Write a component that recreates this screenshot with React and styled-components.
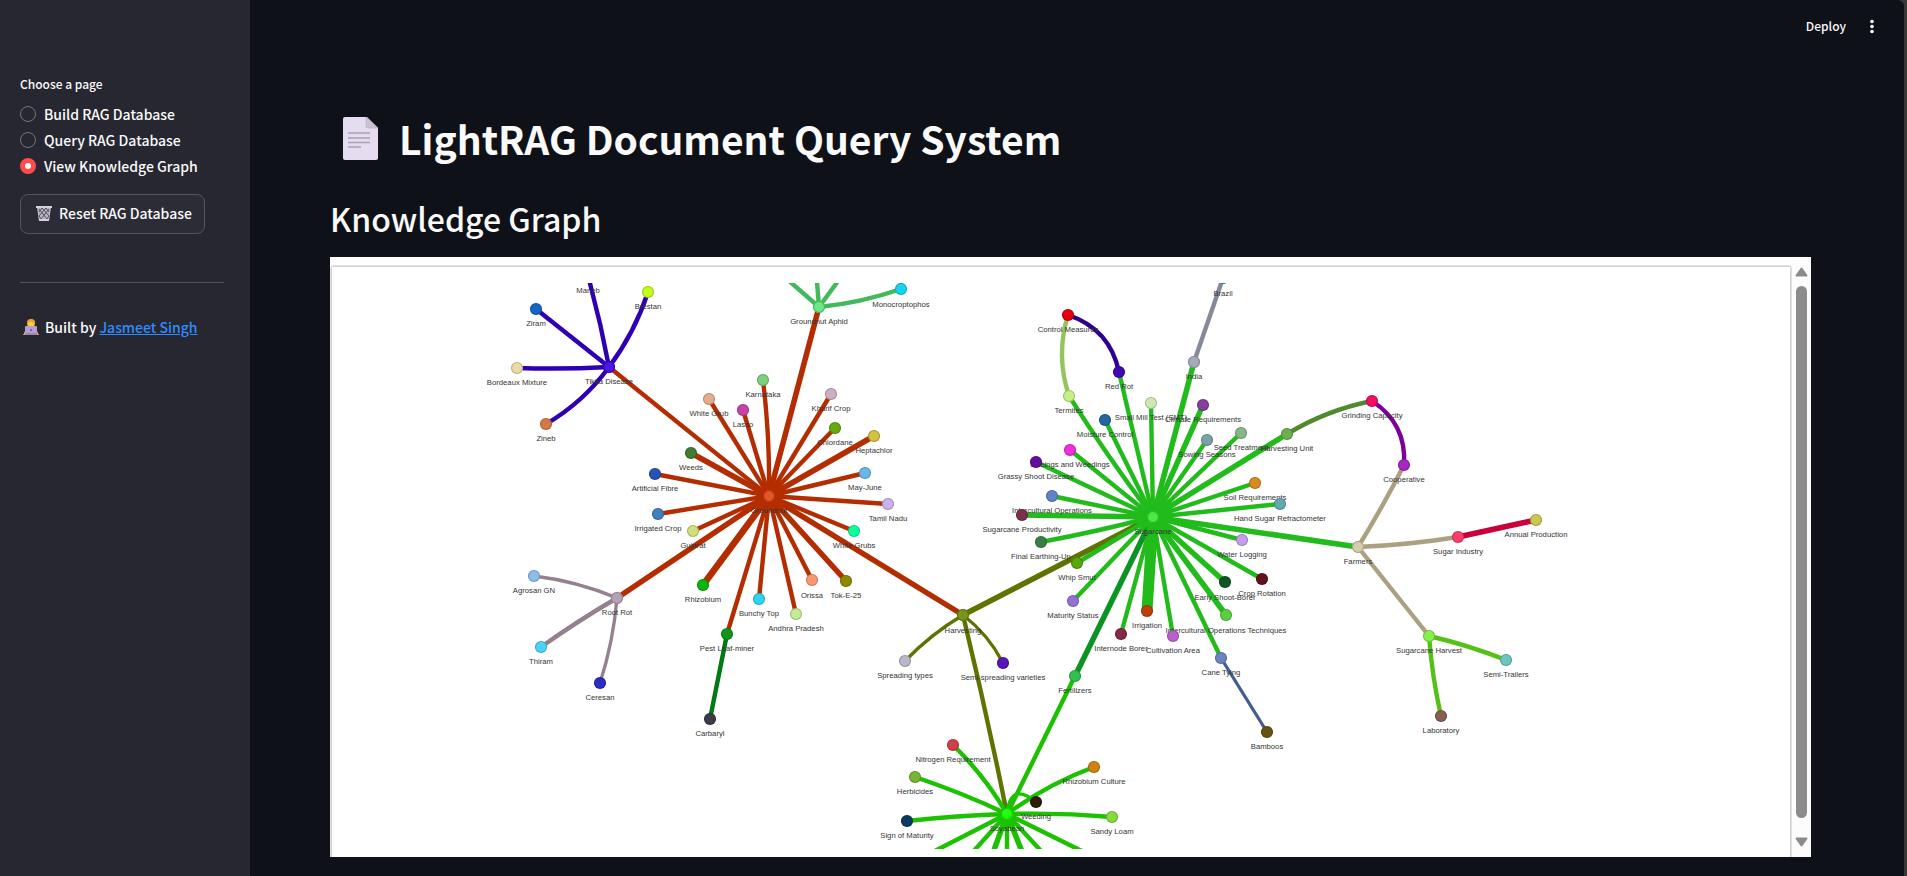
import React, { useState } from "react";
import styled, { createGlobalStyle } from "styled-components";

const GlobalStyle = createGlobalStyle`
  * { box-sizing: border-box; }
  body {
    margin: 0;
    background: #393939;
    color: #fafafa;
    font-family: "Source Sans Pro", "Noto Sans CJK JP", "Noto Sans", sans-serif;
    font-size: 14px;
    font-weight: 500;
    line-height: 24px;
  }
`;

const Shell = styled.div`
  display: flex;
  min-height: 100vh;
  margin-right: 3px;
  background: #0e1117;
  border-top-right-radius: 6px;
  overflow: hidden;
`;

const Sidebar = styled.aside`
  flex: 0 0 250px;
  padding: 74px 26px 24px 20px;
  background: #262730;
`;

const RadioGroup = styled.fieldset`
  margin: 0;
  padding: 0;
  border: 0;
`;

const Legend = styled.legend`
  padding: 0;
  margin-bottom: 6px;
  font-size: 12px;
  line-height: 20px;
`;

const RadioLabel = styled.label`
  display: flex;
  align-items: center;
  gap: 8px;
  height: 24px;
  margin-top: 2px;
  line-height: 22px;
  cursor: pointer;
`;

const RadioInput = styled.input`
  appearance: none;
  width: 16px;
  height: 16px;
  margin: 0;
  border: 1px solid #75767d;
  border-radius: 50%;
  background: #262730;
  &:checked {
    border: 5px solid #ff4b4b;
    background: #fafafa;
  }
`;

const ResetButton = styled.button`
  display: flex;
  align-items: center;
  gap: 6px;
  height: 40px;
  margin-top: 16px;
  padding: 0 12px 2px 14px;
  border: 1px solid #53545c;
  border-radius: 8px;
  background: #2b2c36;
  color: inherit;
  font: inherit;
  white-space: nowrap;
`;

const Divider = styled.hr`
  height: 1px;
  margin: 48px 0 32px;
  border: 0;
  background: #51525a;
`;

const Credit = styled.p`
  display: flex;
  align-items: center;
  gap: 6px;
  margin: 0;
  padding-left: 3px;
  white-space: pre;
`;

const CreditLink = styled.a`
  color: #2f8cff;
`;

const Main = styled.main`
  flex: 1;
  min-width: 0;
  padding-bottom: 19px;
`;

const Toolbar = styled.header`
  display: flex;
  justify-content: flex-end;
  align-items: center;
  gap: 16px;
  height: 52px;
  padding-right: 22px;
`;

const ToolButton = styled.button`
  display: flex;
  align-items: center;
  padding: 0;
  border: 0;
  background: none;
  color: inherit;
  font: inherit;
  font-size: 12px;
`;

const Content = styled.div`
  padding: 58px 93px 0 80px;
`;

const Title = styled.h1`
  display: flex;
  align-items: center;
  gap: 15px;
  margin: 0;
  padding-left: 8px;
  font-size: 39px;
  font-weight: 700;
  line-height: 56px;
`;

const Heading = styled.h2`
  margin: 28px 0 0;
  font-size: 32px;
  font-weight: 500;
  line-height: 48px;
`;

const Panel = styled.section`
  display: flex;
  height: 600px;
  margin-top: 15px;
  background: #fff;
  overflow: hidden;
`;

const Card = styled.div`
  flex: 1;
  min-width: 0;
  height: 740px;
  margin-top: 8px;
  border: 1px solid #dfdfdf;
  border-radius: 4px;
`;

const Network = styled.div`
  height: 738px;
  padding-top: 16px;
  border: 1px solid #d3d3d3;
`;

const Graph = styled.svg`
  display: block;
  width: 100%;
  height: auto;
  text {
    fill: #343434;
    font-family: "Liberation Sans", Arial, sans-serif;
    font-size: 14px;
    font-weight: 400;
    text-anchor: middle;
    dominant-baseline: central;
  }
`;

const ScrollTrack = styled.div`
  display: flex;
  flex-direction: column;
  align-items: center;
  gap: 9px;
  width: 19px;
  padding: 10px 0;
  background: #fcfcfc;
`;

const ScrollThumb = styled.div`
  flex: 1;
  width: 11px;
  margin-bottom: 10px;
  border-radius: 6px;
  background: #8b8b8b;
`;

const GROUND = "#b32d00";
const CANE = "#21bb1c";
const TIKKA = "#2f00b3";
const APHID = "#42b95b";
const ROT = "#94808e";
const HARVEST = "#5f7300";
const SOY = "#1cc200";
const FARM = "#aca083";

// name: [x, y, fill, border]
const nodes = {
  Ziram: [536, 309, "#1265c4"],
  Maneb: [588, 276, "#40a060"],
  Brestan: [648, 292, "#bfff1a"],
  "Bordeaux Mixture": [517, 368, "#edd9a3"],
  "Tikka Disease": [609, 367, "#4b18dd", TIKKA],
  Zineb: [546, 424, "#d27a45"],
  "White Grub": [709, 399, "#e4ab8e"],
  Weeds: [691, 453, "#437c2f"],
  "Artificial Fibre": [655, 474, "#2753b5"],
  "Irrigated Crop": [658, 514, "#417fbd"],
  Gujarat: [693, 531, "#d1de7c"],
  Monocroptophos: [901, 289, "#17d3f2"],
  "Groundnut Aphid": [819, 307, "#6fe585", APHID],
  Karnataka: [763, 380, "#7ad179"],
  "Kharif Crop": [831, 394, "#cab0c4"],
  Lasso: [743, 410, "#c843a3"],
  Chlordane: [835, 428, "#67a90f"],
  Heptachlor: [874, 436, "#d4bf3f"],
  "May-June": [865, 473, "#69b7e7"],
  "Tamil Nadu": [888, 504, "#c8b3ee"],
  "White Grubs": [854, 531, "#0fff9d"],
  Groundnut: [769, 496, "#e05828", GROUND],
  "Agrosan GN": [534, 576, "#8cbcec"],
  "Root Rot": [617, 598, "#b5a3b5", ROT],
  Thiram: [541, 647, "#4bd3ff"],
  Ceresan: [600, 683, "#2a2cc4"],
  Rhizobium: [703, 585, "#08b50b"],
  "Pest Leaf-miner": [727, 634, "#12961a"],
  Carbaryl: [710, 719, "#3f3a47"],
  "Bunchy Top": [759, 599, "#2ed3f2"],
  "Andhra Pradesh": [796, 614, "#c3ec95"],
  Orissa: [812, 580, "#ff9670"],
  "Tok-E-25": [846, 581, "#8e8a00"],
  "Control Measures": [1068, 315, "#e3000f"],
  "Red Rot": [1119, 372, "#4009b3"],
  Termites: [1069, 396, "#c3f08a"],
  "Moisture Control": [1105, 420, "#2168a0"],
  "Small Mill Test (SMT)": [1151, 403, "#cfe9b5"],
  India: [1194, 362, "#a5a9b9", "#858a98"],
  Brazil: [1223, 278, "#1ea88c"],
  "Climate Requirements": [1203, 405, "#84409a"],
  "Hoeings and Weedings": [1070, 450, "#f22de0"],
  "Grassy Shoot Disease": [1036, 462, "#630f9c"],
  "Intercultural Operations": [1052, 496, "#6382c5"],
  "Sugarcane Productivity": [1022, 515, "#7b3149"],
  "Final Earthing-Up": [1041, 542, "#3a7f45"],
  "Whip Smut": [1077, 563, "#57a80d"],
  "Sowing Seasons": [1207, 440, "#7aa1a3"],
  "Seed Treatment": [1241, 433, "#86b786"],
  "Harvesting Unit": [1287, 434, "#70ae50"],
  "Grinding Capacity": [1372, 401, "#f20e63"],
  Cooperative: [1404, 465, "#a22ac2"],
  "Soil Requirements": [1255, 483, "#d98b20"],
  "Hand Sugar Refractometer": [1280, 504, "#62a9af"],
  "Water Logging": [1242, 540, "#c69fec"],
  Farmers: [1358, 547, "#d8ccae", FARM],
  "Annual Production": [1536, 520, "#c8c850"],
  "Sugar Industry": [1458, 537, "#ff3d6b"],
  "Sugarcane Harvest": [1429, 636, "#88f04a"],
  "Semi-Trailers": [1506, 660, "#6cc5c0"],
  Laboratory: [1441, 716, "#875e52"],
  "Maturity Status": [1073, 601, "#9370d4"],
  "Internode Borer": [1121, 634, "#832a44"],
  Irrigation: [1147, 611, "#bd3f0c"],
  "Early Shoot-Borer": [1225, 582, "#11562a"],
  "Crop Rotation": [1262, 579, "#62121f"],
  "Intercultural Operations Techniques": [1226, 615, "#5bce42"],
  "Cultivation Area": [1173, 636, "#b860d0"],
  "Cane Tying": [1221, 658, "#6a84c0"],
  Bamboos: [1267, 732, "#665213"],
  Sugarcane: [1153, 517, "#4ce84a", CANE],
  Harvesting: [963, 615, "#789420", HARVEST],
  "Spreading types": [905, 661, "#bbb7cb"],
  "Semi-spreading varieties": [1003, 663, "#5814b8"],
  Fertilizers: [1075, 676, "#32c14d"],
  "Nitrogen Requirement": [953, 745, "#d04048"],
  Herbicides: [915, 777, "#77b536"],
  "Sign of Maturity": [907, 821, "#0d3a60"],
  Weeding: [1036, 802, "#301b05"],
  "Rhizobium Culture": [1094, 767, "#cf8115"],
  "Sandy Loam": [1112, 817, "#87da3c"],
  Soyabean: [1007, 814, "#1fff0d", SOY],
};

// [from, to (a node name or a point outside the view), colour, weight, bend]
const edges = [
  ["Tikka Disease", "Ziram", TIKKA, 4, 0],
  ["Tikka Disease", "Maneb", TIKKA, 4, 2],
  ["Tikka Disease", "Brestan", TIKKA, 4, 7],
  ["Tikka Disease", "Bordeaux Mixture", TIKKA, 4, -2],
  ["Tikka Disease", "Zineb", TIKKA, 4, -9],
  ["Groundnut", "Tikka Disease", GROUND, 4, 0],
  ["Groundnut", "White Grub", GROUND, 4, 0],
  ["Groundnut", "Weeds", GROUND, 5, 0],
  ["Groundnut", "Artificial Fibre", GROUND, 4, 0],
  ["Groundnut", "Irrigated Crop", GROUND, 4, 0],
  ["Groundnut", "Gujarat", GROUND, 4, 0],
  ["Groundnut", "Groundnut Aphid", GROUND, 5, 0],
  ["Groundnut", "Karnataka", GROUND, 4, 4],
  ["Groundnut", "Kharif Crop", GROUND, 4, 0],
  ["Groundnut", "Lasso", GROUND, 4, 0],
  ["Groundnut", "Chlordane", GROUND, 4, 0],
  ["Groundnut", "Heptachlor", GROUND, 5, 0],
  ["Groundnut", "May-June", GROUND, 4, 0],
  ["Groundnut", "Tamil Nadu", GROUND, 4, 0],
  ["Groundnut", "White Grubs", GROUND, 4, 0],
  ["Groundnut", "Root Rot", GROUND, 5, 0],
  ["Groundnut", "Rhizobium", GROUND, 6, 0],
  ["Groundnut", "Pest Leaf-miner", GROUND, 4, 0],
  ["Groundnut", "Bunchy Top", GROUND, 4, 0],
  ["Groundnut", "Andhra Pradesh", GROUND, 4, 0],
  ["Groundnut", "Orissa", GROUND, 4, 0],
  ["Groundnut", "Tok-E-25", GROUND, 5, 0],
  ["Groundnut", "Harvesting", GROUND, 5, 0],
  ["Groundnut Aphid", "Monocroptophos", APHID, 4, 5],
  ["Groundnut Aphid", [780, 273], APHID, 4, 0],
  ["Groundnut Aphid", [816, 270], APHID, 4, 0],
  ["Groundnut Aphid", [844, 273], APHID, 4, 0],
  ["Root Rot", "Agrosan GN", ROT, 3, 6],
  ["Root Rot", "Thiram", ROT, 4, 2],
  ["Root Rot", "Ceresan", ROT, 3, -5],
  ["Pest Leaf-miner", "Carbaryl", "#007a12", 4, 0],
  ["Sugarcane", "Harvesting", HARVEST, 5, 0],
  ["Sugarcane", "Fertilizers", "#0a9424", 5, 0],
  ["Sugarcane", "Red Rot", CANE, 4, 0],
  ["Sugarcane", "Termites", CANE, 4, -3],
  ["Sugarcane", "Moisture Control", CANE, 4, 0],
  ["Sugarcane", "Small Mill Test (SMT)", CANE, 4, 0],
  ["Sugarcane", "India", CANE, 5, 0],
  ["Sugarcane", "Climate Requirements", CANE, 5, 0],
  ["Sugarcane", "Hoeings and Weedings", CANE, 4, 0],
  ["Sugarcane", "Grassy Shoot Disease", CANE, 4, 0],
  ["Sugarcane", "Intercultural Operations", CANE, 4, 0],
  ["Sugarcane", "Sugarcane Productivity", CANE, 5, 0],
  ["Sugarcane", "Final Earthing-Up", CANE, 4, -2],
  ["Sugarcane", "Whip Smut", CANE, 4, 0],
  ["Sugarcane", "Sowing Seasons", CANE, 4, 0],
  ["Sugarcane", "Seed Treatment", CANE, 4, 0],
  ["Sugarcane", "Harvesting Unit", CANE, 5, 0],
  ["Sugarcane", "Soil Requirements", CANE, 4, 0],
  ["Sugarcane", "Hand Sugar Refractometer", CANE, 4, 0],
  ["Sugarcane", "Water Logging", CANE, 4, 0],
  ["Sugarcane", "Farmers", CANE, 5, 0],
  ["Sugarcane", "Maturity Status", CANE, 4, 0],
  ["Sugarcane", "Internode Borer", CANE, 4, 0],
  ["Sugarcane", "Irrigation", CANE, 10, 0],
  ["Sugarcane", "Early Shoot-Borer", CANE, 5, 0],
  ["Sugarcane", "Crop Rotation", CANE, 4, 0],
  ["Sugarcane", "Intercultural Operations Techniques", CANE, 5, 0],
  ["Sugarcane", "Cultivation Area", CANE, 4, 0],
  ["Sugarcane", "Cane Tying", CANE, 4, 0],
  ["Control Measures", "Red Rot", "#2d008f", 4, -22],
  ["Control Measures", "Termites", "#95c45e", 4, 13],
  ["India", "Brazil", "#858a98", 4, 0],
  ["Harvesting Unit", "Grinding Capacity", "#4f8a2f", 4, -8],
  ["Grinding Capacity", "Cooperative", "#7d0099", 4, -21],
  ["Farmers", "Cooperative", FARM, 4, 2],
  ["Farmers", "Sugar Industry", FARM, 4, 3],
  ["Farmers", "Sugarcane Harvest", FARM, 4, 0],
  ["Sugar Industry", "Annual Production", "#c9003a", 5, 0],
  ["Sugarcane Harvest", "Semi-Trailers", "#55c114", 4, -3],
  ["Sugarcane Harvest", "Laboratory", "#55c114", 4, 3],
  ["Cane Tying", "Bamboos", "#435c91", 3, 0],
  ["Harvesting", "Spreading types", HARVEST, 3, 5],
  ["Harvesting", "Semi-spreading varieties", HARVEST, 3, -7],
  ["Harvesting", "Soyabean", HARVEST, 4, -2],
  ["Fertilizers", "Soyabean", SOY, 4, 0],
  ["Soyabean", "Nitrogen Requirement", SOY, 4, 6],
  ["Soyabean", "Herbicides", SOY, 4, 3],
  ["Soyabean", "Sign of Maturity", SOY, 4, 2],
  ["Soyabean", "Weeding", SOY, 3, -29],
  ["Soyabean", "Rhizobium Culture", SOY, 4, -7],
  ["Soyabean", "Sandy Loam", SOY, 4, -3],
  ["Soyabean", [921, 858], SOY, 4, 0],
  ["Soyabean", [962, 864], SOY, 4, 0],
  ["Soyabean", [989, 864], SOY, 5, 0],
  ["Soyabean", [1007, 864], SOY, 4, 0],
  ["Soyabean", [1027, 864], SOY, 5, 0],
  ["Soyabean", [1053, 864], SOY, 4, 0],
  ["Soyabean", [1098, 859], SOY, 4, 0],
];

// Graph units per stored coordinate: the whole drawing, labels included, scales with the view.
const ZOOM = 0.55;
const u = (v) => v / ZOOM;
const VIEW = [332, 283, 1458, 566].map(u).join(" ");

function Edge({ from, to, color, weight, bend }) {
  const [x1, y1] = nodes[from];
  const [x2, y2] = typeof to === "string" ? nodes[to] : to;
  const dx = x2 - x1;
  const dy = y2 - y1;
  const len = Math.hypot(dx, dy);
  const cx = (x1 + x2) / 2 - (dy / len) * bend;
  const cy = (y1 + y2) / 2 + (dx / len) * bend;
  return (
    <path
      d={`M${u(x1)} ${u(y1)}Q${u(cx)} ${u(cy)} ${u(x2)} ${u(y2)}`}
      fill="none"
      stroke={color}
      strokeWidth={weight * 2}
    />
  );
}

function KnowledgeGraph() {
  return (
    <Graph viewBox={VIEW} role="img" aria-label="Knowledge graph">
      {edges.map(([from, to, color, weight, bend], i) => (
        <Edge key={i} from={from} to={to} color={color} weight={weight} bend={bend} />
      ))}
      {Object.entries(nodes).map(([name, [x, y, fill, border]]) => (
        <g key={name}>
          <circle cx={u(x)} cy={u(y)} r={11} fill={fill} />
          <circle
            cx={u(x)}
            cy={u(y)}
            r={10}
            fill="none"
            stroke={border || "rgba(0,0,0,0.2)"}
            strokeWidth={2}
          />
          <text x={u(x)} y={u(y + 15)}>{name}</text>
        </g>
      ))}
    </Graph>
  );
}

const DocumentIcon = () => (
  <svg width="46" height="46" viewBox="0 0 46 46" aria-hidden="true">
    <path d="M7 2h22l11 11v30a2 2 0 0 1-2 2H7a2 2 0 0 1-2-2V4a2 2 0 0 1 2-2z" fill="#e6dcf0" />
    <path d="M28 2l12 11H30a2 2 0 0 1-2-2z" fill="#cbc3d3" stroke="#a9a2b0" strokeWidth=".5" />
    <path d="M10 18h22M10 23h22M10 27.500h22M10 32h13" stroke="#a9a0b2" strokeWidth="1.700" />
  </svg>
);

const TrashIcon = () => (
  <svg width="18" height="18" viewBox="0 0 18 18" aria-hidden="true">
    <path d="M2 3h14l-1.800 13.500H3.800z" fill="#b9b3c3" />
    <path
      d="M4 5l8 10M7 4l7 8M11 4l3 4M14 5l-8 10M11 4l-7 8M7 4L4 8M4 12l3 4M14 12l-3 4"
      stroke="#4b4857"
      strokeWidth=".9"
    />
    <path d="M1 2h16v2H1zM4 15h10v2H4z" fill="#d5cfdd" />
  </svg>
);

const CoderIcon = () => (
  <svg width="16" height="16" viewBox="0 0 16 16" aria-hidden="true">
    <path d="M1 16c0-4 2-6 7-6s7 2 7 6z" fill="#ead9b0" />
    <rect x="4" y="0" width="8" height="8" rx="3.500" fill="#e6a324" />
    <path d="M5 3.500c2 0 3-1 4-1 0 1 1 1 2 1V6c0 4-6 4-6 0z" fill="#ffc83d" />
    <rect x="2" y="7" width="12" height="8" rx="1" fill="#b4a0d0" />
    <circle cx="8" cy="11" r="1" fill="#65557e" />
    <path d="M0 15h16v1H0z" fill="#d9a23b" />
    <path d="M2 14h12v2H2z" fill="#9b88b8" />
  </svg>
);

const DotsIcon = () => (
  <svg width="20" height="20" viewBox="0 0 20 20" fill="#fafafa" aria-hidden="true">
    <circle cx="10" cy="5.500" r="1.800" />
    <circle cx="10" cy="10.500" r="1.800" />
    <circle cx="10" cy="15.500" r="1.800" />
  </svg>
);

const ScrollArrow = ({ down }) => (
  <svg width="13" height="10" viewBox="0 0 13 10" aria-hidden="true">
    <path
      d={down ? "M1.500 1.500h10L6.500 8.500z" : "M1.500 8.500h10L6.500 1.500z"}
      fill="#8b8b8b"
      stroke="#8b8b8b"
      strokeWidth="2"
      strokeLinejoin="round"
    />
  </svg>
);

const pages = ["Build RAG Database", "Query RAG Database", "View Knowledge Graph"];

export default function App() {
  const [page, setPage] = useState(pages[2]);
  return (
    <>
      <GlobalStyle />
      <Shell>
        <Sidebar>
          <RadioGroup>
            <Legend>Choose a page</Legend>
            {pages.map((name) => (
              <RadioLabel key={name}>
                <RadioInput
                  type="radio"
                  name="page"
                  checked={page === name}
                  onChange={() => setPage(name)}
                />
                {name}
              </RadioLabel>
            ))}
          </RadioGroup>
          <ResetButton type="button">
            <TrashIcon />
            Reset RAG Database
          </ResetButton>
          <Divider />
          <Credit>
            <CoderIcon />
            <span>
              Built by <CreditLink href="#author">Jasmeet Singh</CreditLink>
            </span>
          </Credit>
        </Sidebar>
        <Main>
          <Toolbar>
            <ToolButton type="button">Deploy</ToolButton>
            <ToolButton type="button" aria-label="Menu">
              <DotsIcon />
            </ToolButton>
          </Toolbar>
          <Content>
            <Title>
              <DocumentIcon />
              LightRAG Document Query System
            </Title>
            <Heading>Knowledge Graph</Heading>
            <Panel>
              <Card>
                <Network>
                  <KnowledgeGraph />
                </Network>
              </Card>
              <ScrollTrack>
                <ScrollArrow />
                <ScrollThumb />
                <ScrollArrow down />
              </ScrollTrack>
            </Panel>
          </Content>
        </Main>
      </Shell>
    </>
  );
}
